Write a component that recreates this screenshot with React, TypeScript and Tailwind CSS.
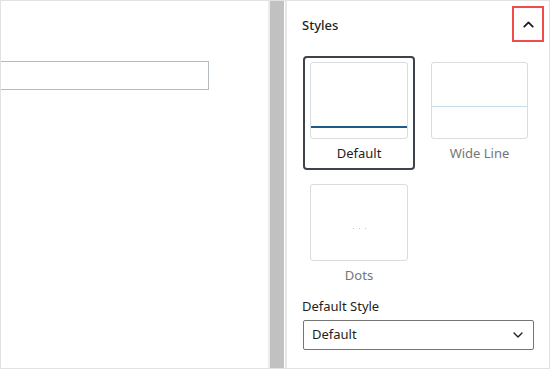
import { ChevronUp, ChevronDown } from "lucide-react";

function StyleOption({ label, selected, children }: { label: string; selected?: boolean; children?: React.ReactNode }) {
  return (
    <div
      className={
        "flex flex-col items-center rounded-[4px] border-2 px-[5px] pt-[4px] h-[114px] " +
        (selected ? "border-[#3c434a]" : "border-transparent")
      }
    >
      <div className="relative w-full h-[77px] rounded-[3px] border border-[#dcdcde] bg-white">{children}</div>
      <div className={"mt-[5px] text-[13px] leading-[18px] " + (selected ? "text-[#1e1e1e]" : "text-[#757575]")}>
        {label}
      </div>
    </div>
  );
}

export default function App() {
  return (
    <div className="w-[550px] h-[369px] flex bg-white overflow-hidden border border-[#e2e2e2] font-['Noto_Sans',sans-serif] text-[#1e1e1e]">
      {/* editor area */}
      <div className="w-[269px] pt-[60px] border-r-2 border-[#ececec]">
        <div className="w-[210px] h-[29px] border border-[#b4bcc0] -ml-[2px]" />
      </div>

      {/* scrollbar */}
      <div className="w-[14px] bg-[#c1c1c1]" />
      <div className="w-[1px] bg-white" />
      <div className="w-[2px] bg-[#e6e6e6]" />

      {/* sidebar */}
      <div className="flex-1 pl-[15px] pr-[13px]">
        <div className="flex items-center justify-between h-[47px] pt-[2px]">
          <span className="text-[13px] font-medium">Styles</span>
          <div className="w-[32px] h-[36px] border-2 border-[#f24b4b] flex items-center justify-center mr-[-8px] -mt-[3px]">
            <ChevronUp size={17} strokeWidth={2.5} className="text-[#1e1e1e]" />
          </div>
        </div>

        <div className="grid grid-cols-[112px_111px] gap-x-[9px] gap-y-[8px] mt-[8px] ml-[1px]">
          <StyleOption label="Default" selected>
            <div className="absolute left-0 right-0 top-[63px] h-[2px] bg-[#1d5d85]" />
          </StyleOption>
          <StyleOption label="Wide Line">
            <div className="absolute left-0 right-0 top-[43px] h-[1px] bg-[#c6dbe8]" />
          </StyleOption>
          <StyleOption label="Dots">
            <div className="absolute left-0 right-0 top-[43px] flex justify-center gap-[5px]">
              <span className="w-[1px] h-[1px] bg-[#b8c4cc]" />
              <span className="w-[1px] h-[1px] bg-[#b8c4cc]" />
              <span className="w-[1px] h-[1px] bg-[#b8c4cc]" />
            </div>
          </StyleOption>
        </div>

        <div className="mt-[5px] text-[13px] leading-[18px] text-[#1e1e1e]">Default Style</div>
        <div className="mt-[5px] w-[231px] h-[30px] ml-[1px] rounded-[2px] border border-[#757575] flex items-center justify-between pl-[8px] pr-[7px]">
          <span className="text-[13px]">Default</span>
          <ChevronDown size={16} strokeWidth={2} className="text-[#1e1e1e]" />
        </div>
      </div>
    </div>
  );
}
